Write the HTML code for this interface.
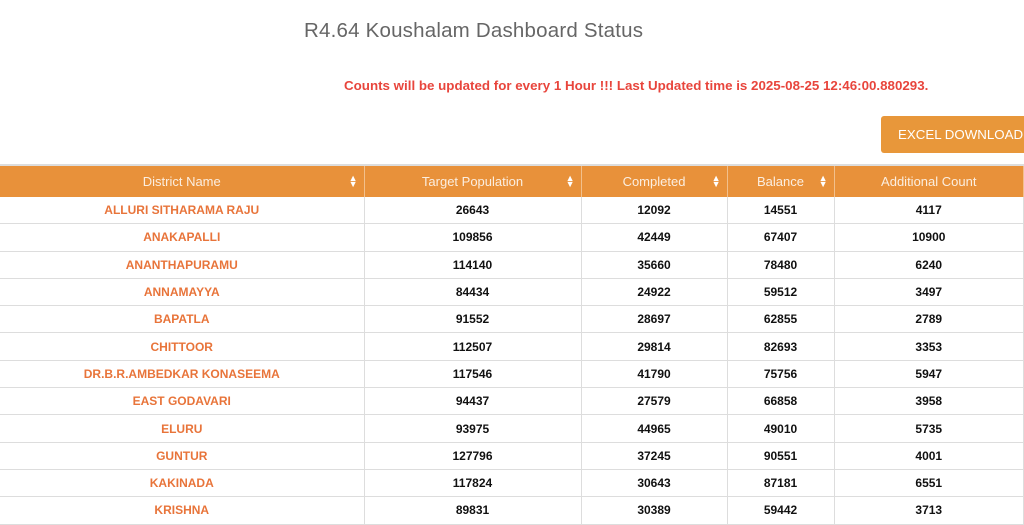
<!DOCTYPE html>
<html><head><style>
body{margin:0;width:1024px;height:513px;overflow:hidden;background:#fff;font-family:"Liberation Sans",sans-serif;}
.t{position:absolute;left:304px;top:19px;font-size:20.5px;color:#666;letter-spacing:0.2px;}
.m{position:absolute;left:344px;top:78px;font-size:13.35px;font-weight:bold;color:#e8453c;}
.b{position:absolute;left:881px;top:116px;width:150px;height:37px;background:#e8973a;border-radius:3px;color:#fff;font-size:13.3px;line-height:38px;padding-left:17px;box-sizing:border-box;}
table{position:absolute;left:0;top:164px;border-collapse:collapse;table-layout:fixed;width:1024px;border-top:2px solid #ddd;}
th{background:#e8913a;color:#fbeee0;font-weight:normal;font-size:13px;height:31px;border-right:1px solid #f2c08c;position:relative;padding:0;}
th i{position:absolute;right:6px;top:9px;font-style:normal;font-size:9px;line-height:6px;color:#fff;}
td{height:26.3px;border-right:1px solid #ddd;border-bottom:1px solid #ddd;text-align:center;font-size:12px;font-weight:bold;color:#111;padding:0;}
td:first-child{color:#e8743a;}
</style></head><body>
<div class="t">R4.64 Koushalam Dashboard Status</div>
<div class="m">Counts will be updated for every 1 Hour !!! Last Updated time is 2025-08-25 12:46:00.880293.</div>
<div class="b">EXCEL DOWNLOAD</div>
<table>
<colgroup><col style="width:364px"><col style="width:217px"><col style="width:146px"><col style="width:107px"><col></colgroup>
<tr><th>District Name<i>▲<br>▼</i></th><th>Target Population<i>▲<br>▼</i></th><th>Completed<i>▲<br>▼</i></th><th>Balance<i>▲<br>▼</i></th><th>Additional Count</th></tr>
<tr><td>ALLURI SITHARAMA RAJU</td><td>26643</td><td>12092</td><td>14551</td><td>4117</td></tr>
<tr><td>ANAKAPALLI</td><td>109856</td><td>42449</td><td>67407</td><td>10900</td></tr>
<tr><td>ANANTHAPURAMU</td><td>114140</td><td>35660</td><td>78480</td><td>6240</td></tr>
<tr><td>ANNAMAYYA</td><td>84434</td><td>24922</td><td>59512</td><td>3497</td></tr>
<tr><td>BAPATLA</td><td>91552</td><td>28697</td><td>62855</td><td>2789</td></tr>
<tr><td>CHITTOOR</td><td>112507</td><td>29814</td><td>82693</td><td>3353</td></tr>
<tr><td>DR.B.R.AMBEDKAR KONASEEMA</td><td>117546</td><td>41790</td><td>75756</td><td>5947</td></tr>
<tr><td>EAST GODAVARI</td><td>94437</td><td>27579</td><td>66858</td><td>3958</td></tr>
<tr><td>ELURU</td><td>93975</td><td>44965</td><td>49010</td><td>5735</td></tr>
<tr><td>GUNTUR</td><td>127796</td><td>37245</td><td>90551</td><td>4001</td></tr>
<tr><td>KAKINADA</td><td>117824</td><td>30643</td><td>87181</td><td>6551</td></tr>
<tr><td>KRISHNA</td><td>89831</td><td>30389</td><td>59442</td><td>3713</td></tr>
</table>
</body></html>
